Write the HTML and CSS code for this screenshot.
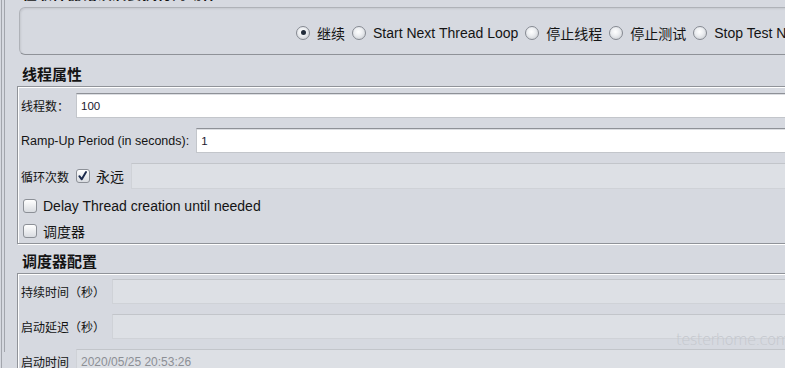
FILE: index.html
```html
<!DOCTYPE html>
<html lang="zh">
<head>
  <meta charset="UTF-8" />
  <meta name="viewport" content="width=device-width, initial-scale=1.0"/>
  <title>线程组</title>
  <link rel="stylesheet" href="styles.css">
</head>
<body>
  <div class="frame">
    <div class="panel">
      <!-- 取样器错误后的动作 -->
      <div class="section-title cut">在取样器错误后要执行的动作</div>
      <div class="action-box">
        <label class="radio"><span class="dot on"></span>继续</label>
        <label class="radio"><span class="dot"></span>Start Next Thread Loop</label>
        <label class="radio"><span class="dot"></span>停止线程</label>
        <label class="radio"><span class="dot"></span>停止测试</label>
        <label class="radio"><span class="dot"></span>Stop Test Now</label>
      </div>

      <!-- 线程属性 -->
      <div class="section-title">线程属性</div>
      <div class="group">
        <div class="row">
          <span class="lbl">线程数：</span>
          <input class="field" value="100">
        </div>
        <div class="row">
          <span class="lbl en">Ramp-Up Period (in seconds):</span>
          <input class="field" value="1">
        </div>
        <div class="row loop-row">
          <span class="lbl">循环次数</span>
          <span class="box checked">
            <svg width="14" height="14" viewBox="0 0 14 14"><path d="M3.6 7.2 L6.2 10.6 L10.8 2.8" fill="none" stroke="#1c2b4d" stroke-width="2.1" stroke-linecap="round" stroke-linejoin="round"/></svg>
          </span>
          <span class="opt">永远</span>
          <div class="field off"></div>
        </div>
        <div class="check-row"><span class="box"></span><span class="opt">Delay Thread creation until needed</span></div>
        <div class="check-row"><span class="box"></span><span class="opt">调度器</span></div>
      </div>

      <!-- 调度器配置 -->
      <div class="section-title second">调度器配置</div>
      <div class="group sched">
        <div class="row">
          <span class="lbl">持续时间（秒）</span>
          <div class="field off"></div>
        </div>
        <div class="row">
          <span class="lbl">启动延迟（秒）</span>
          <div class="field off"></div>
        </div>
        <div class="row">
          <span class="lbl">启动时间</span>
          <div class="field off text">2020/05/25 20:53:26</div>
        </div>
      </div>
    </div>
    <div class="watermark">testerhome.com</div>
  </div>
</body>
</html>
```

FILE: styles.css
```css
body {
  margin: 0;
  height: 368px;
  overflow: hidden;
  background: #d6d9e0;
  font-family: "Liberation Sans", "Noto Sans CJK SC", sans-serif;
  color: #141414;
}

.frame {
  position: relative;
  width: 920px;
  height: 368px;
  margin-left: 1px;
  border-left: 1px solid #a2a5ac;
  overflow: hidden;
}

.panel {
  margin-left: 2px;
  border-left: 1px solid #a2a5ac;
  height: 100%;
  padding-left: 12px;
}

.section-title {
  font-size: 15px;
  font-weight: bold;
  height: 20px;
  line-height: 20px;
  padding-left: 5px;
  margin-top: 10px;
  margin-bottom: 1px;
}

.section-title.cut {
  margin-top: -16px;
  margin-bottom: 0;
}

.section-title.second {
  margin-top: 8px;
}

.action-box {
  margin: 3px 0 0 2px;
  height: 43px;
  border: 1px solid #afb2b8;
  border-bottom-color: #8f9298;
  border-radius: 6px;
  box-shadow: inset 1px 1px 2px rgba(0, 0, 0, 0.08);
  display: flex;
  align-items: center;
  padding: 3px 0 0 276px;
  font-size: 14px;
  gap: 7px;
}

.radio {
  display: flex;
  align-items: center;
  gap: 7px;
}

.dot {
  width: 14px;
  height: 14px;
  border-radius: 50%;
  box-sizing: border-box;
  border: 1px solid #868a92;
  background: radial-gradient(circle at 45% 40%, #ffffff 0%, #eceef1 40%, #c3c6cc 100%);
  position: relative;
}

.dot.on::after {
  content: "";
  position: absolute;
  left: 3.5px;
  top: 3.5px;
  width: 5px;
  height: 5px;
  border-radius: 50%;
  background: #222c3a;
}

.group {
  border: 1px solid #909399;
  border-right: none;
  box-shadow: inset 1px 1px 0 #fff, 1px 1px 0 #fff;
  padding: 6px 0 0 3px;
}

.group.sched {
  padding-top: 5px;
  height: 120px;
}

.row {
  display: flex;
  align-items: center;
  gap: 7px;
  height: 25px;
  margin-bottom: 10px;
}

.row.loop-row {
  height: 26px;
  margin-bottom: 4px;
}

.lbl {
  font-size: 12px;
  white-space: nowrap;
}

.lbl.en {
  font-size: 12.5px;
}

.field {
  flex: 1;
  min-width: 0;
  height: 25px;
  box-sizing: border-box;
  background: #fff;
  border: 1px solid #c3c6cb;
  border-top-color: #8e9197;
  border-right: none;
  box-shadow: inset 0 1px 0 #dcdee2;
  font-family: "Liberation Sans", sans-serif;
  font-size: 11.5px;
  color: #1a1a30;
  padding: 0 4px;
  outline: none;
}

.field.off {
  background: #dde0e5;
  border-color: #cfd2d7;
  border-top-color: #c2c5ca;
  box-shadow: none;
}

.field.text {
  display: flex;
  align-items: center;
  color: #8c8f95;
  font-size: 12px;
}

.loop-row .opt {
  margin-left: -1px;
}

.loop-row .field.off {
  height: 26px;
}

.box {
  width: 14px;
  height: 14px;
  box-sizing: border-box;
  border: 1px solid #8c9097;
  border-radius: 3px;
  background: linear-gradient(#ffffff, #d9dce1);
  display: inline-flex;
  flex-shrink: 0;
}

.box svg {
  margin: -1px 0 0 -1px;
}

.opt {
  font-size: 14px;
  white-space: nowrap;
}

.check-row {
  display: flex;
  align-items: center;
  gap: 6px;
  height: 25px;
  padding-left: 2px;
}

.watermark {
  position: absolute;
  left: 674px;
  top: 331px;
  font-family: "DejaVu Sans", sans-serif;
  font-weight: 200;
  font-size: 15px;
  letter-spacing: -0.7px;
  color: #c4c7cd;
}
```
